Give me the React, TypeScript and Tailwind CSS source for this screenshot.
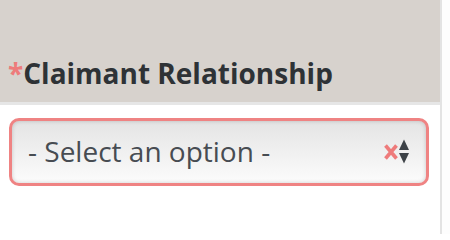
import React from 'react';

const font = { fontFamily: '"Open Sans", "Noto Sans", Arial, sans-serif' };

function ClearIcon() {
  return (
    <svg width="14" height="16" viewBox="0 0 14 16" className="shrink-0">
      <path d="M1.5 1.5 L12.5 14.5 M12.5 1.5 L1.5 14.5" stroke="#ee7b7b" strokeWidth="3.6" strokeLinecap="butt" />
    </svg>
  );
}

function SortArrows() {
  return (
    <svg width="10" height="26" viewBox="0 0 10 26" className="shrink-0">
      <path d="M5 0.5 L10 11 L0 11 Z" fill="#3d4247" />
      <path d="M0 14 L10 14 L5 24.5 Z" fill="#3d4247" />
    </svg>
  );
}

const App = () => {
  return (
    <div className="flex w-[450px] h-[234px] bg-white overflow-hidden" style={font}>
      <div className="w-[440px] flex flex-col">
        <div className="h-[102px] bg-[#d7d2cd] flex items-end px-[8px] pb-[15px]">
          <label className="text-[28px] font-bold leading-none text-[#2e3236]">
            <span className="text-[#ee7b7b]">*</span>Claimant Relationship
          </label>
        </div>
        <div className="h-[3px] bg-[#e6e6e6]" />
        <div className="pl-[9px] pr-[11px] pt-[13px]">
          <div className="h-[68px] rounded-[10px] border-[3px] border-[#ef8383] bg-gradient-to-b from-[#e4e4e4] to-[#fcfcfc] shadow-[inset_0_0_4px_rgba(0,0,0,0.18)] flex items-center pl-[16px] pr-[17px] pb-[2px]">
            <span className="flex-1 text-[28px] text-[#474c52] leading-none">- Select an option -</span>
            <div className="flex items-center gap-[1px] pt-[2px]">
              <ClearIcon />
              <SortArrows />
            </div>
          </div>
        </div>
      </div>
      <div className="w-[2px] bg-[#e3e3e3]" />
      <div className="flex-1 bg-[#fdfdfd]" />
    </div>
  );
};

export default App;
